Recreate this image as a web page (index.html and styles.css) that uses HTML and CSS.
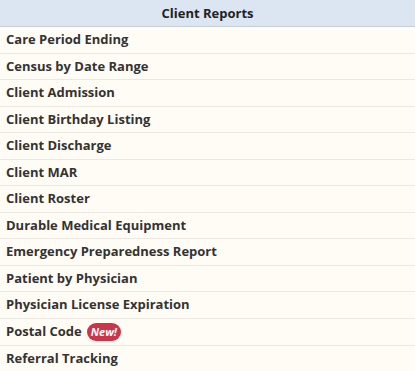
FILE: index.html
```html
<!DOCTYPE html>
<html lang="en">
<head>
    <meta charset="UTF-8">
    <title>Client Reports</title>
    <link rel="stylesheet" href="styles.css">
</head>
<body>
    <section class="panel">
        <div class="panel-head">Client Reports</div>
        <ul class="report-list">
            <li>Care Period Ending</li>
            <li>Census by Date Range</li>
            <li>Client Admission</li>
            <li>Client Birthday Listing</li>
            <li>Client Discharge</li>
            <li>Client MAR</li>
            <li>Client Roster</li>
            <li>Durable Medical Equipment</li>
            <li>Emergency Preparedness Report</li>
            <li>Patient by Physician</li>
            <li>Physician License Expiration</li>
            <li>Postal Code <span class="badge">New!</span></li>
            <li>Referral Tracking</li>
        </ul>
    </section>
</body>
</html>
```
FILE: styles.css
```css
* {
    margin: 0;
    padding: 0;
    box-sizing: border-box;
}
body {
    background-color: #fffcf5;
    font-family: "Open Sans", sans-serif;
    color: #333;
}
.panel {
    width: 100%;
}
.panel-head {
    height: 27px;
    line-height: 26px;
    background-color: #dce6f2;
    border-bottom: 1px solid #c9ced4;
    text-align: center;
    font-weight: 700;
    font-size: 13px;
    color: #222;
}
.report-list {
    list-style: none;
}
.report-list li {
    height: 26.55px;
    line-height: 25.55px;
    padding-left: 6px;
    border-bottom: 1px solid #ebe8e2;
    font-weight: 700;
    font-size: 13px;
    color: #333;
    display: flex;
    align-items: center;
    gap: 5px;
}
.badge {
    display: inline-block;
    background-color: #cc344a;
    color: #fff;
    font-style: italic;
    font-weight: 700;
    font-size: 11px;
    line-height: 18px;
    padding: 0 4px;
    border-radius: 9px;
}
```
